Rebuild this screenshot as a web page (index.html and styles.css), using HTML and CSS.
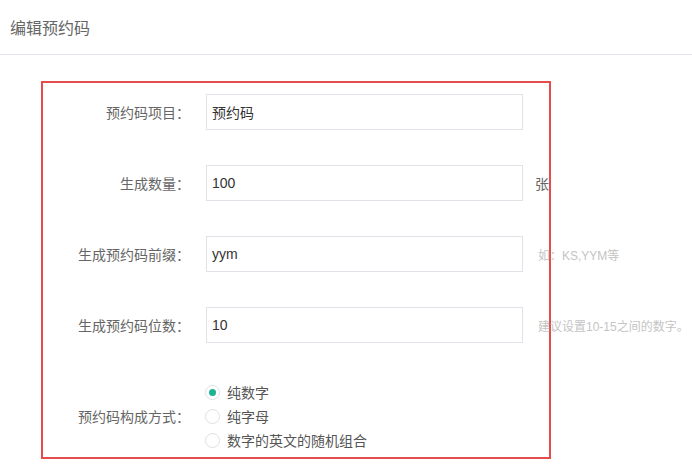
FILE: index.html
```html
<!DOCTYPE html>
<html lang="zh">
<head>
<meta charset="utf-8">
<title>编辑预约码</title>
<link rel="stylesheet" href="styles.css">
</head>
<body>
<header class="page-header">
  <h1 class="page-title">编辑预约码</h1>
</header>
<form class="form-box">
  <div class="form-row">
    <label class="form-label">预约码项目<span class="colon">：</span></label>
    <input class="form-input" type="text" value="预约码">
  </div>
  <div class="form-row">
    <label class="form-label">生成数量<span class="colon">：</span></label>
    <input class="form-input" type="text" value="100">
    <span class="suffix">张</span>
  </div>
  <div class="form-row">
    <label class="form-label">生成预约码前缀<span class="colon">：</span></label>
    <input class="form-input" type="text" value="yym">
    <span class="hint">如：KS,YYM等</span>
  </div>
  <div class="form-row">
    <label class="form-label">生成预约码位数<span class="colon">：</span></label>
    <input class="form-input" type="text" value="10">
    <span class="hint">建议设置10-15之间的数字。</span>
  </div>
  <div class="form-row radio-row">
    <label class="form-label">预约码构成方式<span class="colon">：</span></label>
    <div class="radio-group">
      <label class="radio-item"><span class="radio checked"></span>纯数字</label>
      <label class="radio-item"><span class="radio"></span>纯字母</label>
      <label class="radio-item"><span class="radio"></span>数字的英文的随机组合</label>
    </div>
  </div>
</form>
</body>
</html>
```
FILE: styles.css
```css
* { box-sizing: border-box; }
html, body { margin: 0; padding: 0; background: #fff; overflow: hidden; }
body {
  font-family: "Liberation Sans", "Noto Sans CJK SC", sans-serif;
  font-size: 14px;
  color: #666;
  width: 692px;
  height: 468px;
}
.page-header {
  height: 55px;
  border-bottom: 1px solid #e3e7eb;
  display: flex;
  align-items: center;
  padding-left: 10px;
}
.page-title {
  margin: 0;
  font-size: 16px;
  font-weight: normal;
  color: #666;
}
.form-box {
  margin: 26px 0 0 41px;
  width: 510px;
  height: 378px;
  border: 2px solid #e54d4d;
  padding-top: 11px;
  display: flex;
  flex-direction: column;
  gap: 35px;
}
.form-row {
  display: flex;
  align-items: center;
  height: 36px;
}
.form-label {
  width: 147px;
  text-align: right;
  color: #666;
  flex: none;
  white-space: nowrap;
}
.colon {
  font-family: "Noto Sans CJK TC", sans-serif;
}
.form-input {
  margin-left: 16px;
  width: 317px;
  height: 36px;
  border: 1px solid #dfe3e7;
  padding: 0 5px;
  font: inherit;
  font-size: 14px;
  color: #333;
  outline: none;
  flex: none;
}
.suffix {
  margin-left: 12px;
  color: #666;
  white-space: nowrap;
}
.hint {
  margin-left: 15px;
  font-size: 12px;
  color: #c4c4c4;
  white-space: nowrap;
}
.radio-row {
  height: 72px;
  margin-top: 2px;
}
.radio-group {
  margin-left: 15px;
  display: flex;
  flex-direction: column;
}
.radio-item {
  display: flex;
  align-items: center;
  height: 24px;
  color: #555;
  white-space: nowrap;
}
.radio {
  width: 15px;
  height: 15px;
  border: 1px solid #dde1e5;
  border-radius: 50%;
  margin-right: 7px;
  display: flex;
  align-items: center;
  justify-content: center;
  flex: none;
}
.radio.checked::after {
  content: "";
  width: 7px;
  height: 7px;
  border-radius: 50%;
  background: #1bb394;
}
```
